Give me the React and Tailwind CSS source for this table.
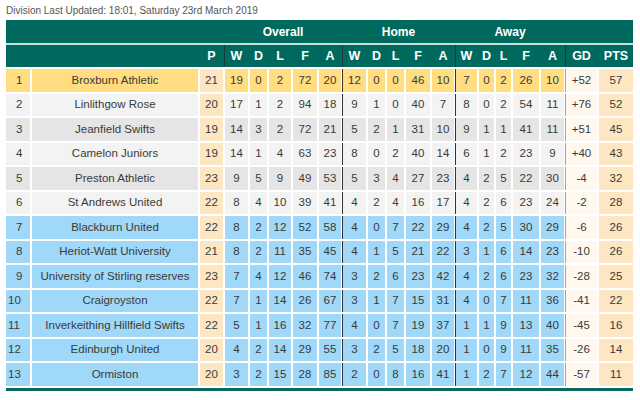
const teams = [
  ["1", "Broxburn Athletic", 21, 19, 0, 2, 72, 20, 12, 0, 0, 46, 10, 7, 0, 2, 26, 10, "+52", 57],
  ["2", "Linlithgow Rose", 20, 17, 1, 2, 94, 18, 9, 1, 0, 40, 7, 8, 0, 2, 54, 11, "+76", 52],
  ["3", "Jeanfield Swifts", 19, 14, 3, 2, 72, 21, 5, 2, 1, 31, 10, 9, 1, 1, 41, 11, "+51", 45],
  ["4", "Camelon Juniors", 19, 14, 1, 4, 63, 23, 8, 0, 2, 40, 14, 6, 1, 2, 23, 9, "+40", 43],
  ["5", "Preston Athletic", 23, 9, 5, 9, 49, 53, 5, 3, 4, 27, 23, 4, 2, 5, 22, 30, "-4", 32],
  ["6", "St Andrews United", 22, 8, 4, 10, 39, 41, 4, 2, 4, 16, 17, 4, 2, 6, 23, 24, "-2", 28],
  ["7", "Blackburn United", 22, 8, 2, 12, 52, 58, 4, 0, 7, 22, 29, 4, 2, 5, 30, 29, "-6", 26],
  ["8", "Heriot-Watt University", 21, 8, 2, 11, 35, 45, 4, 1, 5, 21, 22, 3, 1, 6, 14, 23, "-10", 26],
  ["9", "University of Stirling reserves", 23, 7, 4, 12, 46, 74, 3, 2, 6, 23, 42, 4, 2, 6, 23, 32, "-28", 25],
  ["10", "Craigroyston", 22, 7, 1, 14, 26, 67, 3, 1, 7, 15, 31, 4, 0, 7, 11, 36, "-41", 22],
  ["11", "Inverkeithing Hillfield Swifts", 22, 5, 1, 16, 32, 77, 4, 0, 7, 19, 37, 1, 1, 9, 13, 40, "-45", 16],
  ["12", "Edinburgh United", 20, 4, 2, 14, 29, 55, 3, 2, 5, 18, 20, 1, 0, 9, 11, 35, "-26", 14],
  ["13", "Ormiston", 20, 3, 2, 15, 28, 85, 2, 0, 8, 16, 41, 1, 2, 7, 12, 44, "-57", 11],
];

const cols =
  "grid grid-cols-[24px_166px_23px_23px_17px_22px_24px_22px_23px_17px_17px_24px_22px_21px_15px_15px_26px_23px_31px_34px] gap-x-[2px]";

const rowColor = (i) => {
  if (i === 0) return "bg-[#ffdd80]";
  if (i >= 6) return "bg-[#9fd8f9]";
  return i % 2 === 1 ? "bg-[#f3f3f3]" : "bg-[#e5e5e5]";
};

export default function App() {
  return (
    <div className="w-[640px] h-[400px] bg-white font-['Liberation_Sans',Arial,sans-serif] text-[#3a3a3a]">
      <div className="h-[20px] flex items-center pl-[6px] text-[10px] text-[#555]">
        Division Last Updated: 18:01, Saturday 23rd March 2019
      </div>
      <div className="ml-[6px] w-[627px]">
        <Header />
        <div className="mt-[2px] flex flex-col gap-y-[2px]">
          {teams.map((team, i) => (
            <Row key={i} team={team} index={i} />
          ))}
        </div>
        <div className="mt-[2.5px] h-[3px] bg-[#0b6a5f]"></div>
      </div>
    </div>
  );
}

const Header = () => {
  const letters = ["W", "D", "L", "F", "A"];
  return (
    <div className="text-white font-bold">
      <div className={`${cols} h-[23px] bg-[#00695e] items-center text-[12px]`}>
        <div className="col-span-3"></div>
        <div className="col-span-5 text-center">Overall</div>
        <div className="col-span-5 text-center">Home</div>
        <div className="col-span-5 text-center">Away</div>
        <div className="col-span-2"></div>
      </div>
      <div className="h-[2px] bg-[#c4e0db]"></div>
      <div className={`${cols} h-[22px] bg-[#00695e] text-[12.5px]`}>
        <div></div>
        <div></div>
        <div className="flex items-center justify-center">P</div>
        {[0, 1, 2].map((g) =>
          letters.map((l, j) => (
            <div
              key={g + l}
              className={`flex items-center justify-center ${
                j === 0 ? "shadow-[-1px_0_0_#1b3d39]" : ""
              }`}
            >
              {l}
            </div>
          ))
        )}
        <div className="flex items-center justify-center shadow-[-1px_0_0_#1b3d39]">
          GD
        </div>
        <div className="flex items-center justify-center">PTS</div>
      </div>
    </div>
  );
};

const Row = ({ team, index }) => {
  const bg = rowColor(index);
  const [pos, name, ...nums] = team;
  return (
    <div className={`${cols} h-[22.5px] text-[11.5px]`}>
      <div
        className={`${bg} flex items-center ${
          pos.length === 1 ? "pl-[10px]" : "pl-[2px]"
        }`}
      >
        {pos}
      </div>
      <div className={`${bg} flex items-center justify-center whitespace-nowrap`}>
        {name}
      </div>
      {nums.map((n, j) => {
        let cls = bg;
        if (j === 0) cls = "bg-[#fde7c3]";
        if (j === 16) cls = "bg-[#fff8ee] shadow-[-1px_0_0_#9aa7ae]";
        if (j === 17) cls = "bg-[#fde7c3]";
        if (j === 6 || j === 11) cls = `${bg} shadow-[-1px_0_0_#333]`;
        return (
          <div key={j} className={`${cls} flex items-center justify-center`}>
            {n}
          </div>
        );
      })}
    </div>
  );
};
